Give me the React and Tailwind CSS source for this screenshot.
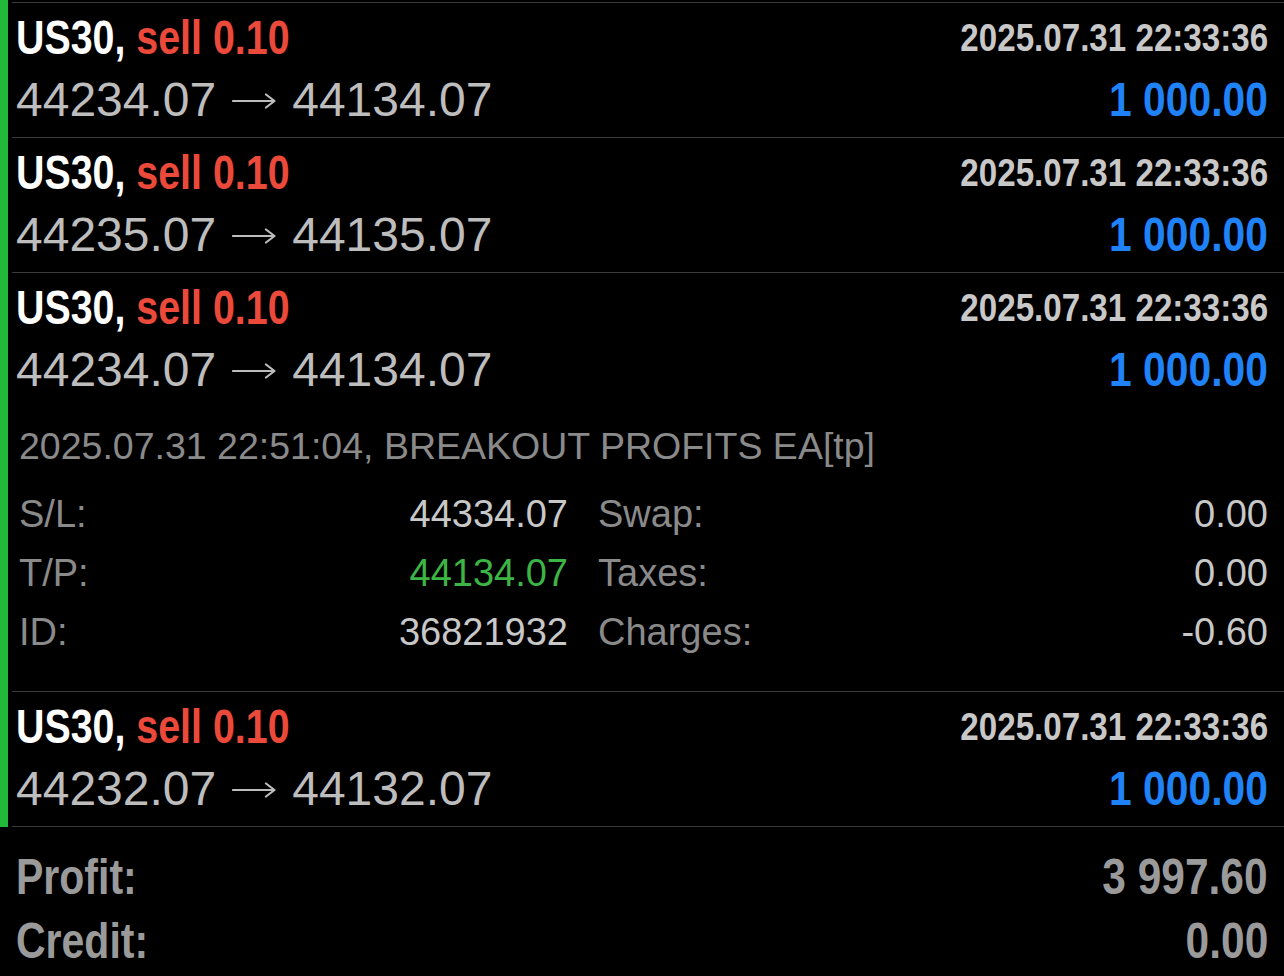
const trades = [
  { open: '44234.07', close: '44134.07' },
  { open: '44235.07', close: '44135.07' },
  {
    open: '44234.07',
    close: '44134.07',
    details: {
      header: '2025.07.31 22:51:04, BREAKOUT PROFITS EA[tp]',
      sl: '44334.07',
      tp: '44134.07',
      id: '36821932',
      swap: '0.00',
      taxes: '0.00',
      charges: '-0.60'
    }
  },
  { open: '44232.07', close: '44132.07' }
];

const regular = { fontFamily: '"Liberation Sans", Arial, sans-serif' };

// condensed bold look: Arial-width bold squeezed horizontally
const Narrow = ({ children, right, className = '' }) => (
  <span
    className={`inline-block font-bold whitespace-nowrap ${right ? 'origin-right scale-x-[0.85]' : 'origin-left scale-x-[0.82]'} ${className}`}
    style={regular}
  >
    {children}
  </span>
);

const Arrow = () => (
  <svg width="44" height="18" viewBox="0 0 44 18" className="mx-[16px] mt-[2px]" fill="none" stroke="#bdbdbd" strokeWidth="2.2" strokeLinecap="round" strokeLinejoin="round">
    <path d="M1 9H42" />
    <path d="M34 2.5L42.5 9L34 15.5" />
  </svg>
);

const TradeRow = ({ trade }) => {
  const d = trade.details;
  return (
    <div className="flex">
      <div className="w-[8px] shrink-0 bg-[#22b83a]" />
      <div className="flex-1 ml-[4px] border-b border-[#3a3a3a]">
        <div className="pl-[4px] pr-[16px] pt-[4px] pb-[6px]">
          <div className="flex items-center justify-between h-[62px]">
            <Narrow className="text-[48px]">
              <span className="text-white">US30, </span>
              <span className="text-[#eb4a3a]">sell 0.10</span>
            </Narrow>
            <Narrow right className="text-[39px] text-[#c8c8c8]">
              2025.07.31 22:33:36
            </Narrow>
          </div>
          <div className="flex items-center justify-between h-[62px]">
            <div className="flex items-center text-[48px] text-[#bdbdbd]" style={regular}>
              <span>{trade.open}</span>
              <Arrow />
              <span>{trade.close}</span>
            </div>
            <Narrow right className="text-[48px] text-[#1f82f7]">
              1 000.00
            </Narrow>
          </div>
        </div>

        {d && (
          <div className="pl-[7px] pr-[16px] pt-[17px] pb-[29px]" style={regular}>
            <div className="h-[44px] flex items-center text-[37.5px] text-[#8a8a8a]">
              {d.header}
            </div>
            <div className="mt-[17px] grid grid-cols-[549px_1fr] text-[38px]">
              <DetailRow label="S/L:" value={d.sl} />
              <DetailRow label="Swap:" value={d.swap} right />
              <DetailRow label="T/P:" value={d.tp} valueClass="text-[#3cb545]" />
              <DetailRow label="Taxes:" value={d.taxes} right />
              <DetailRow label="ID:" value={d.id} />
              <DetailRow label="Charges:" value={d.charges} right />
            </div>
          </div>
        )}
      </div>
    </div>
  );
};

const DetailRow = ({ label, value, right, valueClass = 'text-[#c8c8c8]' }) => (
  <div className={`flex items-center justify-between h-[59px] ${right ? 'pl-[30px]' : ''}`}>
    <span className="text-[#8a8a8a]">{label}</span>
    <span className={valueClass}>{value}</span>
  </div>
);

export default function App() {
  return (
    <div className="w-[1284px] h-[976px] bg-black overflow-hidden">
      <div className="flex h-[3px]">
        <div className="w-[8px] shrink-0 bg-[#22b83a]" />
        <div className="flex-1 ml-[4px] border-b border-[#3a3a3a]" />
      </div>
      {trades.map((t, i) => (
        <TradeRow key={i} trade={t} />
      ))}
      <div className="pl-[16px] pr-[16px] pt-[18px] text-[#9a9a9a] text-[50px]">
        <div className="flex items-center justify-between h-[64px]">
          <Narrow>Profit:</Narrow>
          <Narrow right>3 997.60</Narrow>
        </div>
        <div className="flex items-center justify-between h-[64px]">
          <Narrow>Credit:</Narrow>
          <Narrow right>0.00</Narrow>
        </div>
      </div>
    </div>
  );
}
